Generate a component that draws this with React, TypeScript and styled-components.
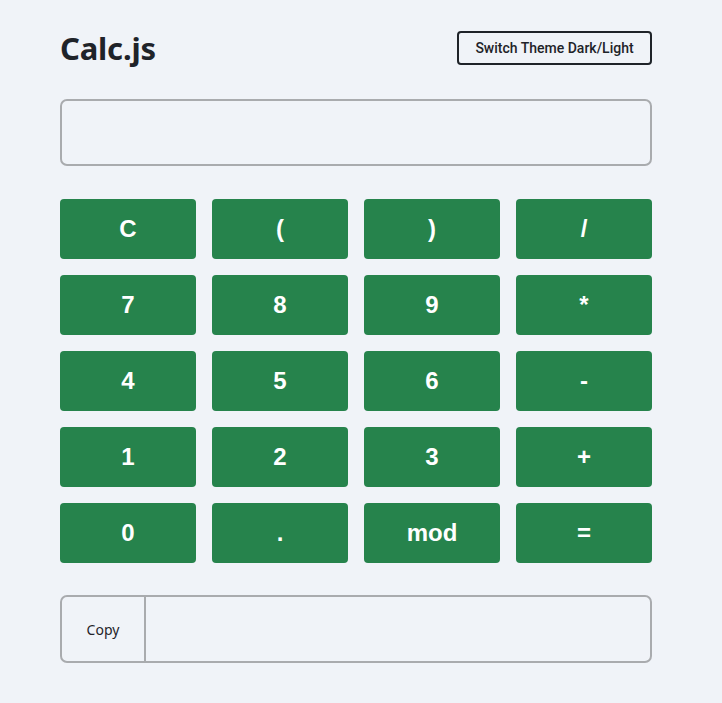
import React from "react";
import styled, { createGlobalStyle } from "styled-components";

const Global = createGlobalStyle`
  html, body { margin: 0; padding: 0; background: #f0f3f8; }
  body { font-family: "Liberation Sans", Arial, sans-serif; }
`;

const Page = styled.div`
  width: 592px;
  padding: 31px 0 40px 60px;
  display: flex;
  flex-direction: column;
`;

const Header = styled.header`
  display: flex;
  align-items: center;
  justify-content: space-between;
  height: 34px;
`;

const Title = styled.h1`
  margin: 0;
  font-family: "Noto Sans", "Open Sans", sans-serif;
  font-weight: 700;
  font-size: 31px;
  letter-spacing: -0.2px;
  color: #1f2329;
`;

const ThemeButton = styled.button`
  height: 34px;
  width: 195px;
  box-sizing: border-box;
  border: 2px solid #1f2329;
  border-radius: 4px;
  background: transparent;
  font-family: Roboto, "Liberation Sans", sans-serif;
  font-weight: 500;
  font-size: 14px;
  color: #1f2329;
  padding: 0;
`;

const Display = styled.input`
  margin-top: 34px;
  height: 67px;
  box-sizing: border-box;
  border: 2px solid #a9abae;
  border-radius: 7px;
  background: transparent;
  outline: none;
`;

const Keys = styled.div`
  margin-top: 33px;
  display: grid;
  grid-template-columns: repeat(4, 136px);
  grid-auto-rows: 60px;
  column-gap: 16px;
  row-gap: 16px;
`;

const Key = styled.button`
  border: none;
  border-radius: 4px;
  background: #26834c;
  color: #ffffff;
  font-family: "Liberation Sans", Arial, sans-serif;
  font-weight: 700;
  font-size: 24px;
  padding: 0;
`;

const CopyBar = styled.div`
  margin-top: 32px;
  height: 68px;
  box-sizing: border-box;
  border: 2px solid #a9abae;
  border-radius: 7px;
  display: flex;
`;

const CopyButton = styled.button`
  width: 84px;
  border: none;
  border-right: 2px solid #a9abae;
  background: transparent;
  font-family: "Noto Sans", "Open Sans", sans-serif;
  font-size: 14px;
  color: #1f2329;
  padding: 0;
`;

const CopyField = styled.div`
  flex: 1;
`;

const keys = ["C", "(", ")", "/", "7", "8", "9", "*", "4", "5", "6", "-", "1", "2", "3", "+", "0", ".", "mod", "="];

export default function App() {
  return (
    <>
      <Global />
      <Page>
        <Header>
          <Title>Calc.js</Title>
          <ThemeButton>Switch Theme Dark/Light</ThemeButton>
        </Header>
        <Display readOnly />
        <Keys>
          {keys.map((k) => (
            <Key key={k}>{k}</Key>
          ))}
        </Keys>
        <CopyBar>
          <CopyButton>Copy</CopyButton>
          <CopyField />
        </CopyBar>
      </Page>
    </>
  );
}
